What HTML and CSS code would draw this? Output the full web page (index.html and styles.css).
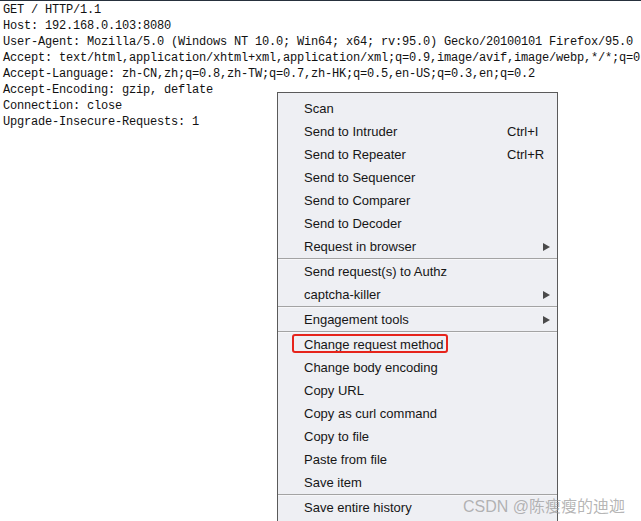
FILE: index.html
```html
<!DOCTYPE html>
<html lang="en">
<head>
  <meta charset="UTF-8">
  <title>Request - context menu</title>
  <link rel="stylesheet" href="styles.css">
</head>
<body>

<pre class="request">GET / HTTP/1.1
Host: 192.168.0.103:8080
User-Agent: Mozilla/5.0 (Windows NT 10.0; Win64; x64; rv:95.0) Gecko/20100101 Firefox/95.0
Accept: text/html,application/xhtml+xml,application/xml;q=0.9,image/avif,image/webp,*/*;q=0.8
Accept-Language: zh-CN,zh;q=0.8,zh-TW;q=0.7,zh-HK;q=0.5,en-US;q=0.3,en;q=0.2
Accept-Encoding: gzip, deflate
Connection: close
Upgrade-Insecure-Requests: 1</pre>

<!-- Context menu -->
<ul class="menu">
  <li class="item"><span>Scan</span></li>
  <li class="item"><span>Send to Intruder</span><span class="key">Ctrl+I</span></li>
  <li class="item"><span>Send to Repeater</span><span class="key">Ctrl+R</span></li>
  <li class="item"><span>Send to Sequencer</span></li>
  <li class="item"><span>Send to Comparer</span></li>
  <li class="item"><span>Send to Decoder</span></li>
  <li class="item"><span>Request in browser</span><span class="arrow"></span></li>
  <li class="sep"></li>
  <li class="item"><span>Send request(s) to Authz</span></li>
  <li class="item"><span>captcha-killer</span><span class="arrow"></span></li>
  <li class="sep"></li>
  <li class="item"><span>Engagement tools</span><span class="arrow"></span></li>
  <li class="sep"></li>
  <li class="item marked"><span>Change request method</span></li>
  <li class="item"><span>Change body encoding</span></li>
  <li class="item"><span>Copy URL</span></li>
  <li class="item"><span>Copy as curl command</span></li>
  <li class="item"><span>Copy to file</span></li>
  <li class="item"><span>Paste from file</span></li>
  <li class="item"><span>Save item</span></li>
  <li class="sep"></li>
  <li class="item"><span>Save entire history</span></li>
</ul>

<div class="watermark">CSDN @陈瘦瘦的迪迦</div>

</body>
</html>
```

FILE: styles.css
```css
html, body {
  margin: 0;
  height: 100%;
  overflow: hidden;
}

body {
  background: #fff;
  border-top: 1px solid #26303c;
  position: relative;
}

.request {
  margin: 0;
  padding: 1px 0 0 3px;
  font-family: "Liberation Mono", monospace;
  font-size: 12px;
  letter-spacing: -0.2px;
  line-height: 16px;
  color: #111;
  white-space: pre;
}

.menu {
  position: absolute;
  left: 277px;
  top: 91px;
  width: 281px;
  box-sizing: border-box;
  margin: 0;
  padding: 4px 0 20px 0;
  list-style: none;
  background: #eeeff3;
  border: 1px solid #5a5a5a;
  font-family: "Liberation Sans", Arial, sans-serif;
  font-size: 13px;
  color: #161616;
}

.item {
  position: relative;
  display: grid;
  grid-template-columns: 1fr 43px;
  align-items: center;
  height: 23px;
  padding: 0 7px 0 26px;
}

.key {
  justify-self: start;
}

.arrow {
  justify-self: end;
  width: 0;
  height: 0;
  border-left: 7px solid #4a4a4a;
  border-top: 4px solid transparent;
  border-bottom: 4px solid transparent;
}

.sep {
  height: 0;
  border-top: 1px solid #a3a3a3;
  border-bottom: 1px solid #f7f7f9;
}

.marked::after {
  content: "";
  position: absolute;
  left: 14px;
  top: 1px;
  width: 156px;
  height: 19px;
  box-sizing: border-box;
  border: 2px solid #e6241b;
  border-radius: 3px;
}

.watermark {
  position: absolute;
  left: 463px;
  top: 492px;
  font-family: "Liberation Sans", "Noto Sans CJK SC", sans-serif;
  font-size: 16px;
  color: rgba(150, 150, 150, 0.7);
  white-space: nowrap;
}
```
